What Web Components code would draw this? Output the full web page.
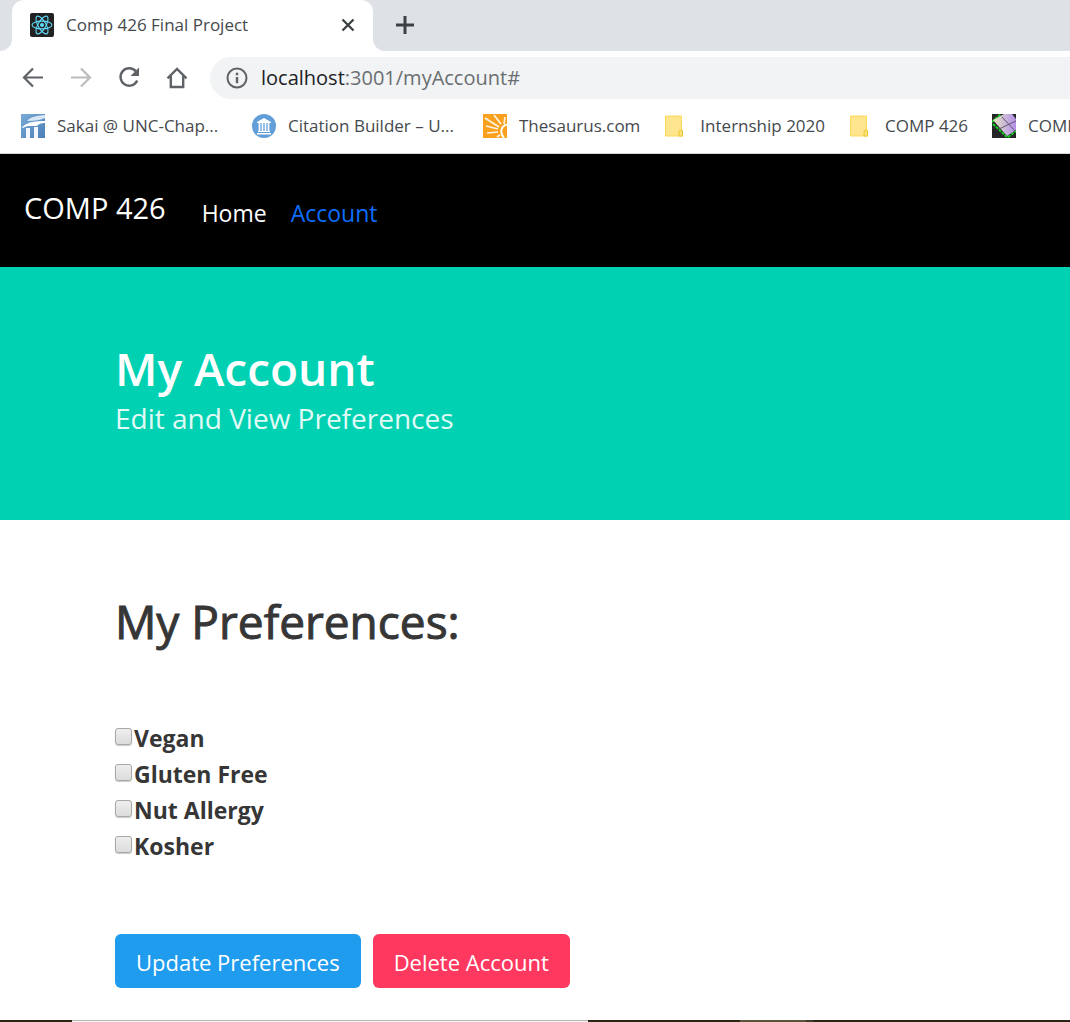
<!DOCTYPE html>
<html lang="en">
<head>
<meta charset="utf-8">
<meta name="viewport" content="width=device-width, initial-scale=1">
<title>Comp 426 Final Project</title>
<style>
  html, body { margin: 0; }
  body { font-family: "Open Sans", "Noto Sans", sans-serif; color: #363636; background: #fff; }
</style>
</head>
<body>
<app-window></app-window>

<script>
const define = (name, html) => {
  const template = document.createElement('template');
  template.innerHTML = html;
  customElements.define(name, class extends HTMLElement {
    constructor() {
      super();
      this.attachShadow({ mode: 'open' }).append(template.content.cloneNode(true));
    }
  });
};

define('tab-strip', `
<style>
  :host { display: flex; height: 51px; background: #dee1e6; overflow: hidden; }
  .edge { width: 12px; background: #fff; flex: none; }
  .edge i { display: block; height: 100%; background: #dee1e6; }
  .left i { border-bottom-right-radius: 12px; }
  .right i { border-bottom-left-radius: 12px; }
  .tab { box-sizing: border-box; width: 361px; height: 51px; padding: 0 16px 2px 18px; background: #fff; border-radius: 12px 12px 0 0; display: flex; align-items: center; }
  .tab span { flex: 1; margin-left: 12px; font-size: 17px; line-height: 24px; color: #45494d; }
  button { border: 0; padding: 0; background: none; width: 18px; height: 24px; display: grid; place-items: center; }
  .new { width: 40px; height: 49px; }
  svg { display: block; }
</style>
<div class="edge left"><i></i></div>
<div class="tab">
  <svg width="24" height="24" viewBox="0 0 24 24"><rect width="24" height="24" rx="2" fill="#222"/><g fill="none" stroke="#61dafb" stroke-width="1.1"><ellipse cx="12" cy="12" rx="10" ry="3.9"/><ellipse cx="12" cy="12" rx="10" ry="3.9" transform="rotate(60 12 12)"/><ellipse cx="12" cy="12" rx="10" ry="3.9" transform="rotate(120 12 12)"/></g><circle cx="12" cy="12" r="2" fill="#61dafb"/></svg>
  <span>Comp 426 Final Project</span>
  <button aria-label="Close tab"><svg width="14" height="14" viewBox="0 0 14 14"><path d="M1.500 1.500l11 11M12.500 1.500l-11 11" stroke="#3c4043" stroke-width="2.300"/></svg></button>
</div>
<div class="edge right"><i></i></div>
<button class="new" aria-label="New tab"><svg width="18" height="18" viewBox="0 0 18 18"><path d="M9 0v18M0 9h18" stroke="#3c4043" stroke-width="3"/></svg></button>
`);

define('tool-bar', `
<style>
  :host { display: flex; align-items: center; height: 54px; padding-left: 21px; background: #fff; }
  nav { display: flex; gap: 24px; flex: none; }
  button { border: 0; padding: 0; background: none; width: 24px; height: 24px; color: #5f6368; }
  button:disabled { color: #babcbe; }
  svg { display: block; fill: none; stroke: currentColor; stroke-width: 2.2; }
  .address { flex: 1; display: flex; align-items: center; height: 42px; margin-left: 21px; padding-left: 16px; background: #f1f3f4; border-radius: 21px 0 0 21px; color: #5f6368; }
  .address svg { stroke-width: 2; }
  a { margin-left: 13px; font-size: 20px; line-height: 30px; color: #6a6e72; text-decoration: none; }
  b { font-weight: 400; color: #202124; }
</style>
<nav>
  <button aria-label="Back"><svg width="24" height="24" viewBox="0 0 24 24"><path d="M22 11.500H3.500M12 2.500l-9 9 9 9"/></svg></button>
  <button aria-label="Forward" disabled><svg width="24" height="24" viewBox="0 0 24 24"><path d="M2 11.500h18.500M12 2.500l9 9-9 9"/></svg></button>
  <button aria-label="Reload"><svg width="24" height="24" viewBox="0 0 24 24"><path d="M19 5.500A8.700 8.700 0 1 0 20.200 14.500" stroke-width="2.400"/><path d="M22 1.500v8.500h-8.500z" fill="currentColor" stroke="none"/></svg></button>
  <button aria-label="Home"><svg width="24" height="24" viewBox="0 0 24 24"><path d="M2.500 12.300L12 3l9.500 9.300M5.800 10v11h12.400V10" stroke-width="2.400"/></svg></button>
</nav>
<div class="address">
  <svg width="22" height="22" viewBox="0 0 22 22"><circle cx="11" cy="11" r="9.500"/><path d="M11 10v6.200M11 5.800v2.400" stroke-width="2.400"/></svg>
  <a href="#"><b>localhost</b>:3001/myAccount#</a>
</div>
`);

define('book-mark', `
<style>
  :host { display: block; flex: none; }
  :host([long]) { width: 207px; }
  a { display: flex; align-items: center; gap: 12px; color: #45494d; text-decoration: none; font-size: 17px; line-height: 24px; white-space: nowrap; }
</style>
<a href="#"><slot name="icon"></slot><slot></slot></a>
`);

define('bookmarks-bar', `
<style>
  :host { display: flex; gap: 24px; height: 49px; padding: 0 0 6px 21px; box-sizing: border-box; align-items: center; border-bottom: 1px solid #d4d5d6; overflow: hidden; }
  svg { display: block; }
</style>
<book-mark long><svg slot="icon" width="24" height="24" viewBox="0 0 24 24"><defs><linearGradient id="g" x2="1" y2="1"><stop stop-color="#79aad6"/><stop offset="1" stop-color="#4b7eb6"/></linearGradient></defs><rect width="24" height="24" fill="url(#g)"/><path d="M6 7Q9 2 24 1v3Q18 7 6 7z" fill="#d7e7f5"/><path d="M1 13Q8 6 24 7v2Q18 9 16 12H7L1 14z" fill="#fff"/><path d="M5 14h4v10H5zM13 13h4v11h-4z" fill="#f2f7fc"/></svg>Sakai @ UNC-Chap...</book-mark>
<book-mark long><svg slot="icon" width="24" height="24" viewBox="0 0 24 24"><circle cx="12" cy="12" r="12" fill="#629ed8"/><path d="M5 8l7-4 7 4v1H5zM6 17h12v1H6zM5 19h14v1.500H5z" fill="#fff"/><path d="M7.500 9v8M10.500 9v8M13.500 9v8M16.500 9v8" stroke="#fff" stroke-width="1.700"/></svg>Citation Builder – U...</book-mark>
<book-mark><svg slot="icon" width="24" height="24" viewBox="0 0 24 24"><rect width="24" height="24" fill="#f9a11f"/><path d="M24 10.500c-7 2-7 9-3 13.500" fill="none" stroke="#fff" stroke-width="2"/><path d="M22 3l-1 7M11 1l7 9M2 4l14 9M3 12l12 3M4 19l11-1M14 23l3-2" stroke="#fff3df" stroke-width="1.700"/></svg>Thesaurus.com</book-mark>
<book-mark><svg slot="icon" width="24" height="24" viewBox="0 0 24 24"><path d="M1.500 2h16v14.500h1V22h-17z" fill="#ffe58d" stroke="#ffd95a"/><path d="M15 22v-4q0-2 2-2t1.500 2v4z" fill="#ffe37d" stroke="#edc531"/></svg>Internship 2020</book-mark>
<book-mark><svg slot="icon" width="24" height="24" viewBox="0 0 24 24"><path d="M1.500 2h16v14.500h1V22h-17z" fill="#ffe58d" stroke="#ffd95a"/><path d="M15 22v-4q0-2 2-2t1.500 2v4z" fill="#ffe37d" stroke="#edc531"/></svg>COMP 426</book-mark>
<book-mark><svg slot="icon" width="24" height="24" viewBox="0 0 24 24"><defs><linearGradient id="c"><stop stop-color="#e4e6b4"/><stop offset=".5" stop-color="#cbbad8"/><stop offset="1" stop-color="#b18de8"/></linearGradient></defs><rect width="24" height="24" fill="#262626"/><path d="M0 8L9 0M1 10l15 14M16 23l8-6" stroke="#12cf25" stroke-width="2" stroke-dasharray="3 1"/><path d="M1 6L12 0h8l4 5v11l-9 6z" fill="url(#c)"/><path d="M10 3l13 14M7 15L24 7" stroke="#62566c" stroke-width="1"/></svg>COMP</book-mark>
`);

define('site-nav', `
<style>
  :host { display: flex; align-items: center; gap: 36px; height: 113px; padding-left: 24px; background: #000; }
  a { color: #fff; text-decoration: none; font-size: 23px; line-height: 36px; }
  .brand { font-size: 29px; padding-bottom: 6px; }
  nav { display: flex; gap: 24px; padding-top: 4px; }
  .current { color: #0d6efd; }
</style>
<a class="brand" href="#">COMP 426</a>
<nav><a href="#">Home</a><a class="current" href="#" aria-current="page">Account</a></nav>
`);

define('page-hero', `
<style>
  :host { display: block; padding: 74px 36px 83px 115px; background: #00d1b2; color: #fff; }
  h1 { margin: 0 0 4px; font-size: 46px; line-height: 54px; font-weight: 600; }
  p { margin: 0; font-size: 28px; line-height: 38px; color: #e1faf6; }
</style>
<h1><slot name="title"></slot></h1>
<p><slot></slot></p>
`);

define('pref-option', `
<style>
  :host { display: block; }
  label { display: flex; align-items: center; gap: 2px; font-size: 23px; line-height: 36px; font-weight: 700; }
  input { appearance: none; box-sizing: border-box; width: 17px; height: 17px; margin: 0 0 4px; border: 1px solid #a8a8a8; border-radius: 3px; background: linear-gradient(#eee, #dcdcdc); box-shadow: 0 1px 1px #ccc; }
  input:checked { background: #209cee; }
</style>
<label><input type="checkbox"><slot></slot></label>
`);

define('action-button', `
<style>
  :host { display: block; }
  button { font: inherit; font-size: 22px; line-height: 36px; padding: 10px 21px 8px; border: 0; border-radius: 6px; background: var(--tone); color: #fff; }
</style>
<button type="button"><slot></slot></button>
`);

define('preferences-form', `
<style>
  :host { display: block; padding: 74px 36px 30px 115px; }
  h2 { margin: 0; font-size: 46px; line-height: 54px; font-weight: 500; -webkit-text-stroke: 1px currentColor; }
  .options { margin: 72px 0 70px; }
  .actions { display: flex; gap: 12px; }
</style>
<h2>My Preferences:</h2>
<div class="options">
  <pref-option>Vegan</pref-option>
  <pref-option>Gluten Free</pref-option>
  <pref-option>Nut Allergy</pref-option>
  <pref-option>Kosher</pref-option>
</div>
<div class="actions">
  <action-button style="--tone:#209cee">Update Preferences</action-button>
  <action-button style="--tone:#ff3860">Delete Account</action-button>
</div>
`);

define('desktop-edge', `
<style>
  :host { display: flex; height: 2px; background: #2c2412; }
  .bar { margin-left: 72px; width: 516px; background: linear-gradient(#b8b8b4 50%, #f4f4f2 50%); }
  .item { margin-left: 152px; width: 66px; background: #5c533d; }
  .mark { width: 7px; background: #403a2c; }
</style>
<div class="bar"></div><div class="item"></div><div class="mark"></div>
`);

define('app-window', `
<style>
  :host { display: flex; flex-direction: column; min-height: 100vh; overflow: hidden; }
  main { flex: 1; }
</style>
<tab-strip></tab-strip>
<tool-bar></tool-bar>
<bookmarks-bar></bookmarks-bar>
<site-nav></site-nav>
<main>
  <page-hero><span slot="title">My Account</span>Edit and View Preferences</page-hero>
  <preferences-form></preferences-form>
</main>
<desktop-edge></desktop-edge>
`);
</script>
</body>
</html>
